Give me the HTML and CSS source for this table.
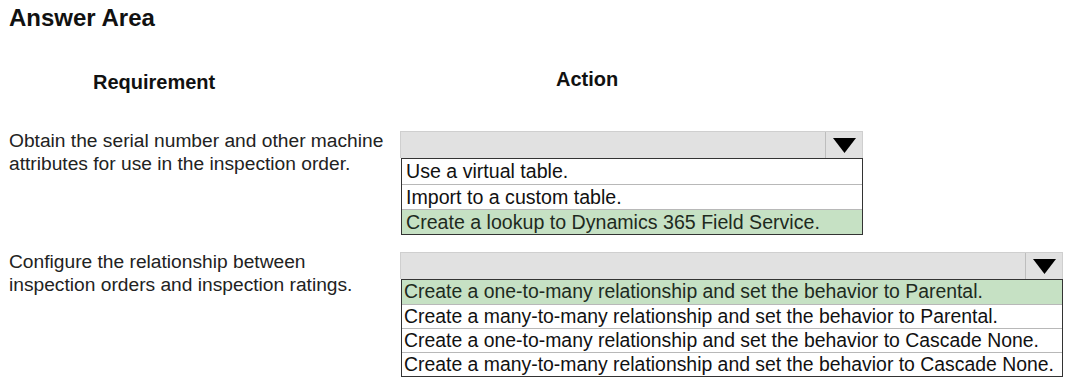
FILE: index.html
```html
<!DOCTYPE html>
<html>
<head>
<meta charset="utf-8">
<link rel="stylesheet" href="styles.css">
</head>
<body>
<div class="page">
  <h1 class="title">Answer Area</h1>
  <div class="heads">
    <div class="head-req">Requirement</div>
    <div class="head-act">Action</div>
  </div>
  <div class="row row1">
    <div class="req">Obtain the serial number and other machine<br>attributes for use in the inspection order.</div>
    <div class="dd dd1">
      <div class="dd-head"><div class="dd-field"></div><div class="dd-btn"><svg width="23" height="15" viewBox="0 0 23 15"><polygon points="0,0 23,0 11.5,15" fill="#000"/></svg></div></div>
      <div class="dd-list">
        <div class="opt">Use a virtual table.</div>
        <div class="opt">Import to a custom table.</div>
        <div class="opt sel">Create a lookup to Dynamics 365 Field Service.</div>
      </div>
    </div>
  </div>
  <div class="row row2">
    <div class="req">Configure the relationship between<br>inspection orders and inspection ratings.</div>
    <div class="dd dd2">
      <div class="dd-head"><div class="dd-field"></div><div class="dd-btn"><svg width="23" height="15" viewBox="0 0 23 15"><polygon points="0,0 23,0 11.5,15" fill="#000"/></svg></div></div>
      <div class="dd-list narrow">
        <div class="opt sel">Create a one-to-many relationship and set the behavior to Parental.</div>
        <div class="opt">Create a many-to-many relationship and set the behavior to Parental.</div>
        <div class="opt">Create a one-to-many relationship and set the behavior to Cascade None.</div>
        <div class="opt">Create a many-to-many relationship and set the behavior to Cascade None.</div>
      </div>
    </div>
  </div>
</div>
</body>
</html>
```
FILE: styles.css
```css
* { box-sizing: border-box; }
html, body { margin: 0; padding: 0; background: #fff; }
body { font-family: "Liberation Sans", Arial, sans-serif; color: #1a1a1a; }
.page { padding: 4px 0 0 9px; width: 1073px; height: 388px; overflow: hidden; }
.title { margin: 0; font-size: 24px; font-weight: bold; line-height: 28px; color: #111; }
.heads { display: flex; margin-top: 36px; height: 30px; }
.head-req { font-size: 20px; font-weight: bold; margin-left: 84px; padding-top: 3px; width: 463px; color: #111; }
.head-act { font-size: 20px; font-weight: bold; color: #111; }
.row { display: flex; }
.row1 { margin-top: 33px; }
.row2 { margin-top: 17px; }
.req { width: 391px; font-size: 19.2px; line-height: 23px; margin-top: -2px; color: #222; }
.dd { display: flex; flex-direction: column; }
.dd1 { width: 463px; }
.dd2 { width: 663px; }
.dd-head { display: flex; height: 27px; background: #e1e1e1; border: 1px solid #cfcfcf; border-bottom: none; }
.dd-field { flex: 1; }
.dd-btn { width: 37px; border-left: 1px solid #bdbdbd; display: flex; align-items: center; justify-content: center; }
.dd-btn svg { display: block; }
.dd-list { border: 1px solid #333; margin-left: 1px; }
.opt { height: 25px; line-height: 24px; font-size: 19.6px; padding-left: 4px; border-top: 1px solid #b8b8b8; color: #111; white-space: nowrap; }
.opt:first-child { border-top: none; }
.opt.sel { background: #c6e1c4; color: #1e2a1e; }
.narrow .opt { height: 24px; line-height: 23px; font-size: 19.4px; padding-left: 2px; }
```
